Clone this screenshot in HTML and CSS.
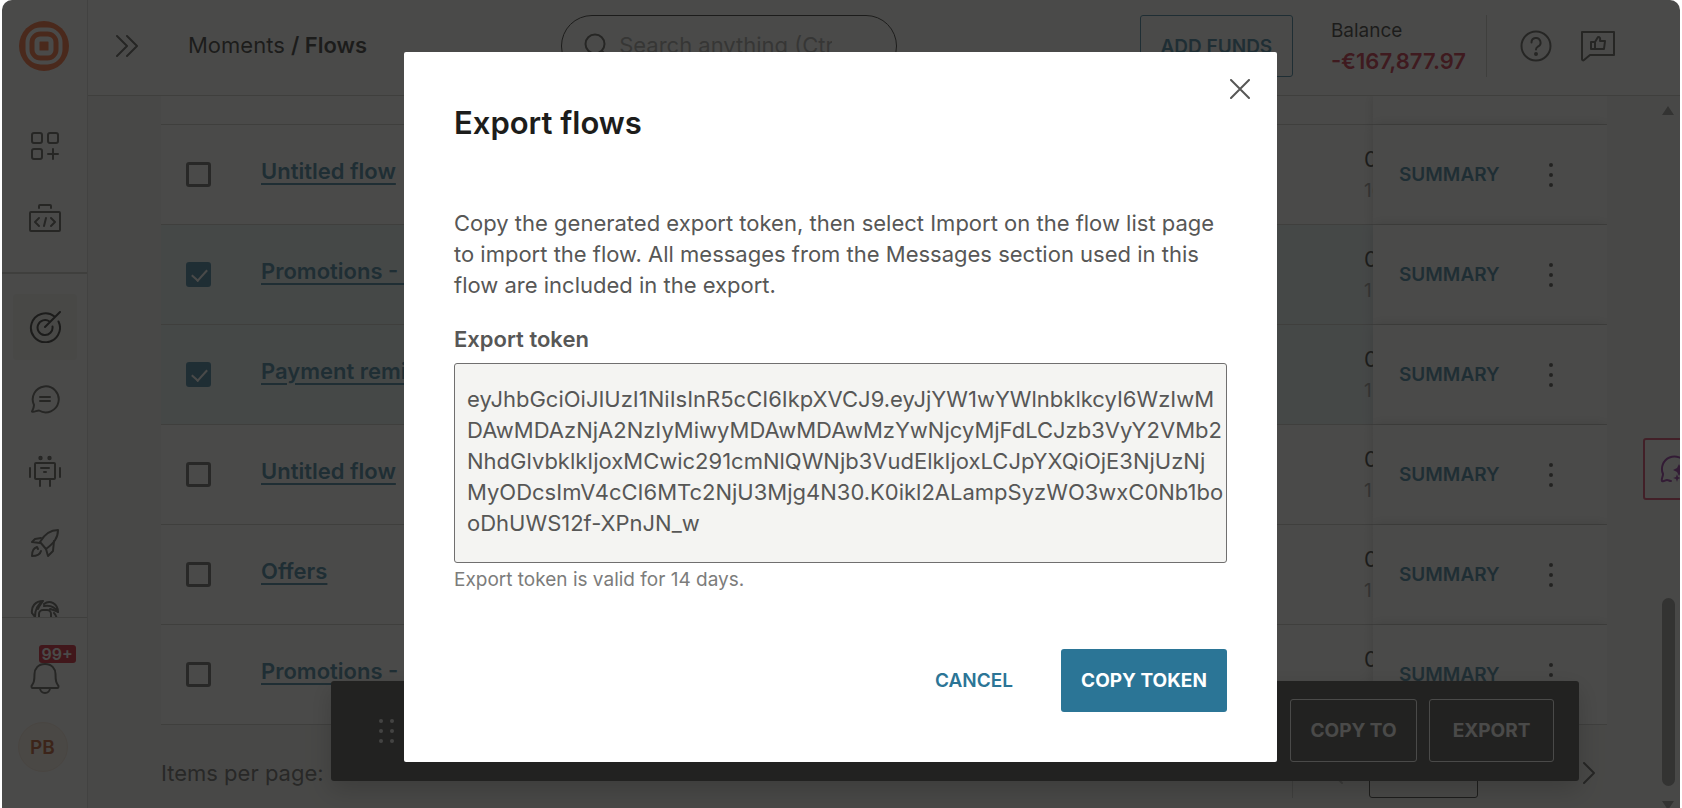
FILE: index.html
```html
<!DOCTYPE html>
<html lang="en">
<head>
    <meta charset="UTF-8">
    <meta name="viewport" content="width=device-width, initial-scale=1.0">
    <title>Flows</title>
    <link rel="stylesheet" href="styles.css">
</head>
<body>

<div class="app">

    <aside class="sidebar">
        <a class="logo" href="#" aria-label="Home">
            <svg width="50" height="50" viewBox="0 0 50 50">
                <circle cx="25" cy="25" r="25" fill="#ff5a1f"/>
                <rect x="8.5" y="8.5" width="33" height="33" rx="13" fill="none" stroke="#fff" stroke-width="4"/>
                <rect x="18" y="18" width="14" height="14" rx="3" fill="none" stroke="#fff" stroke-width="5"/>
            </svg>
        </a>

        <nav class="menu">
            <a href="#" aria-label="Apps">
                <svg width="32" height="32" viewBox="0 0 32 32">
                    <rect x="3" y="3" width="10" height="10" rx="2"/>
                    <rect x="19" y="3" width="10" height="10" rx="2"/>
                    <rect x="3" y="19" width="10" height="10" rx="2"/>
                    <path d="M24 19v10M19 24h10"/>
                </svg>
            </a>
            <a href="#" aria-label="Developer tools">
                <svg width="32" height="32" viewBox="0 0 32 32">
                    <rect x="1" y="10" width="30" height="19" rx="1"/>
                    <path d="M10 6V4a1 1 0 0 1 1-1h10a1 1 0 0 1 1 1v2M10 16l-4 4 4 4M22 16l4 4-4 4M17 16l-2 8"/>
                </svg>
            </a>
            <hr>
            <a href="#" class="active" aria-label="Moments">
                <svg width="32" height="32" viewBox="0 0 32 32">
                    <path d="M25.5 5.5A14.5 14.5 0 1 0 29.5 10.5M20.5 10.5A7.5 7.5 0 1 0 23.5 15.5M16 16L31 1"/>
                </svg>
            </a>
            <a href="#" aria-label="Conversations">
                <svg width="32" height="32" viewBox="0 0 32 32">
                    <path d="M5 22A13 13 0 1 1 10 27.5C7.5 27.5 5 29.5 3 28.5C4 26.5 5 24.5 5 22z"/>
                    <path d="M11 14h10M11 18h10"/>
                </svg>
            </a>
            <a href="#" aria-label="Answers">
                <svg width="32" height="32" viewBox="0 0 32 32">
                    <rect x="6" y="8" width="20" height="16" rx="1"/>
                    <path d="M12 13h8M15 17h2M11 24v7M21 24v7M1 13v9M31 13v9"/>
                    <circle cx="11.5" cy="3" r="1.2"/>
                    <circle cx="20.5" cy="3" r="1.2"/>
                </svg>
            </a>
            <a href="#" aria-label="Broadcast">
                <svg width="32" height="32" viewBox="0 0 32 32">
                    <path d="M11 15C15 8 20 3 29 3C29 11 25 16 17 22z"/>
                    <path d="M12 11L6 12L3 15L11 16M17 22L19 29L24 24L25 14"/>
                    <path d="M8 20C4 21 3 25 3 29C7 29 11 28 12 24M8 20l1 2"/>
                </svg>
            </a>
            <a href="#" aria-label="People">
                <svg width="32" height="32" viewBox="0 0 32 32">
                    <path d="M3 14C2 8 6 2 14 2C9 5 6 9 6 18M3 14L6 18M14 2C12 5 10 7 9 10M15 5C21 0 29 5 29 13C26 8 21 6 15 7"/>
                    <path d="M29 13C26 11 24 11 21 10M10 22v-7a4 4 0 0 1 4-4h4a4 4 0 0 1 4 4v7M25 14c2 2 3 5 3 8"/>
                </svg>
            </a>
        </nav>

        <div class="account">
            <button class="bell" aria-label="Notifications">
                <svg width="32" height="34" viewBox="0 0 32 34">
                    <path d="M16 2c-7 0-10.5 5-10.5 10c0 8-1 9-3 12c0 1 0 2 1 2h25c1 0 1-1 1-2c-2-3-3-4-3-12c0-5-3.5-10-10.5-10zM11 26a5 5 0 0 0 10 0"/>
                </svg>
                <span class="badge">99+</span>
            </button>
            <button class="avatar">PB</button>
        </div>
    </aside>

    <div class="page">
        <header class="topbar">
            <button class="expand" aria-label="Expand menu">
                <svg width="22" height="22" viewBox="0 0 22 22">
                    <path d="M1 1l10 10L1 21M11 1l10 10L11 21"/>
                </svg>
            </button>
            <div class="breadcrumb">Moments <b>/ Flows</b></div>

            <label class="search">
                <svg width="24" height="24" viewBox="0 0 24 24">
                    <circle cx="11" cy="11" r="9.5"/>
                    <path d="M18 18l5 5"/>
                </svg>
                <input type="text" placeholder="Search anything (Ctr" aria-label="Search">
            </label>

            <div class="tools">
                <button class="add-funds">ADD FUNDS</button>
                <div class="balance">
                    <span>Balance</span>
                    <strong>-€167,877.97</strong>
                </div>
                <button class="icon-btn" aria-label="Help">
                    <svg width="32" height="32" viewBox="0 0 32 32">
                        <circle cx="16" cy="16" r="14.5"/>
                        <path d="M11.5 12.5a4.5 4.5 0 1 1 6.5 4c-1.5 1-2 1.5-2 3"/>
                        <circle cx="16" cy="24" r="1"/>
                    </svg>
                </button>
                <button class="icon-btn" aria-label="Feedback">
                    <svg width="36" height="32" viewBox="0 0 36 32">
                        <path d="M2 2h32v23H10l-6 5c-1 1-2 0-2-1z"/>
                        <path d="M11 12h4v7h-4zM15 12l3-5c2 0 2.5 1 2 4h5l-1 8h-9z"/>
                    </svg>
                </button>
            </div>
        </header>

        <main class="content">
            <div class="table-wrap">
                <table>
                    <thead>
                        <tr>
                            <td class="col-check"></td>
                            <td></td>
                            <td class="col-date"></td>
                            <td class="col-actions"></td>
                        </tr>
                    </thead>
                    <tbody>
                        <tr>
                            <td><input type="checkbox" aria-label="Untitled flow"></td>
                            <td><a href="#">Untitled flow</a></td>
                            <td class="date">0<small>16</small></td>
                            <td class="actions"><div><button class="summary">SUMMARY</button><button class="more" aria-label="More"><i></i><i></i><i></i></button></div></td>
                        </tr>
                        <tr class="selected">
                            <td><input type="checkbox" checked aria-label="Promotions"></td>
                            <td><a href="#">Promotions - A</a></td>
                            <td class="date">0<small>1</small></td>
                            <td class="actions"><div><button class="summary">SUMMARY</button><button class="more" aria-label="More"><i></i><i></i><i></i></button></div></td>
                        </tr>
                        <tr class="selected">
                            <td><input type="checkbox" checked aria-label="Payment reminder"></td>
                            <td><a href="#">Payment reminder</a></td>
                            <td class="date">0<small>1</small></td>
                            <td class="actions"><div><button class="summary">SUMMARY</button><button class="more" aria-label="More"><i></i><i></i><i></i></button></div></td>
                        </tr>
                        <tr>
                            <td><input type="checkbox" aria-label="Untitled flow"></td>
                            <td><a href="#">Untitled flow</a></td>
                            <td class="date">0<small>1</small></td>
                            <td class="actions"><div><button class="summary">SUMMARY</button><button class="more" aria-label="More"><i></i><i></i><i></i></button></div></td>
                        </tr>
                        <tr>
                            <td><input type="checkbox" aria-label="Offers"></td>
                            <td><a href="#">Offers</a></td>
                            <td class="date">0<small>1</small></td>
                            <td class="actions"><div><button class="summary">SUMMARY</button><button class="more" aria-label="More"><i></i><i></i><i></i></button></div></td>
                        </tr>
                        <tr>
                            <td><input type="checkbox" aria-label="Promotions"></td>
                            <td><a href="#">Promotions - A</a></td>
                            <td class="date">0<small>1</small></td>
                            <td class="actions"><div><button class="summary">SUMMARY</button><button class="more" aria-label="More"><i></i><i></i><i></i></button></div></td>
                        </tr>
                    </tbody>
                </table>
            </div>

            <div class="pagination">
                <span>Items per page:</span>
                <div class="pager">
                    <button class="prev" aria-label="Previous page">
                        <svg width="12" height="22" viewBox="0 0 12 22"><path d="M11 1L1 11l10 10"/></svg>
                    </button>
                    <input type="text" aria-label="Page">
                    <button aria-label="Next page">
                        <svg width="12" height="22" viewBox="0 0 12 22"><path d="M1 1l10 10L1 21"/></svg>
                    </button>
                </div>
            </div>

            <div class="scrollbar">
                <span class="up"></span>
                <span class="thumb"></span>
                <span class="down"></span>
            </div>
        </main>
    </div>

    <div class="selection-bar">
        <span class="grip"><i></i><i></i><i></i><i></i><i></i><i></i></span>
        <button class="copy-to">COPY TO</button>
        <button class="export">EXPORT</button>
    </div>

    <button class="assistant" aria-label="Assistant">
        <svg width="32" height="32" viewBox="0 0 32 32">
            <path d="M4 21A12 12 0 1 1 27 11M4 21c0 3-2 5-1 7c2 1 3-1 5-1s2 1 4 1"/>
            <path class="star" d="M20 11l2 4 4 2-4 2-2 4-2-4-4-2 4-2zM18 21l1 3 3 1-3 1-1 3-1-3-3-1 3-1z"/>
        </svg>
    </button>

    <div class="backdrop">
        <div class="modal" role="dialog" aria-labelledby="modal-title">
            <button class="close" aria-label="Close">
                <svg width="20" height="20" viewBox="0 0 20 20"><path d="M1 1l18 18M19 1L1 19"/></svg>
            </button>
            <h2 id="modal-title">Export flows</h2>
            <p>Copy the generated export token, then select Import on the flow list page to import the flow. All messages from the Messages section used in this flow are included in the export.</p>
            <label for="token">Export token</label>
            <textarea id="token" readonly>eyJhbGciOiJIUzI1NiIsInR5cCI6IkpXVCJ9.eyJjYW1wYWlnbklkcyI6WzIwM
DAwMDAzNjA2NzIyMiwyMDAwMDAwMzYwNjcyMjFdLCJzb3VyY2VMb2
NhdGlvbklkIjoxMCwic291cmNlQWNjb3VudElkIjoxLCJpYXQiOjE3NjUzNj
MyODcsImV4cCI6MTc2NjU3Mjg4N30.K0ikl2ALampSyzWO3wxC0Nb1bo
oDhUWS12f-XPnJN_w</textarea>
            <small class="hint">Export token is valid for 14 days.</small>
            <div class="modal-actions">
                <button class="cancel">CANCEL</button>
                <button class="primary">COPY TOKEN</button>
            </div>
        </div>
    </div>

</div>

</body>
</html>
```
FILE: styles.css
```css
* {
    box-sizing: border-box;
}

body {
    margin: 0;
    padding: 0 2px;
    height: 100vh;
    overflow: hidden;
    background: #fff;
    color: #1d1d1b;
    font-family: Inter, "Liberation Sans", sans-serif;
    font-size: 22px;
}

button, input, textarea {
    font-family: inherit;
    margin: 0;
}

button {
    padding: 0;
    border: none;
    background: none;
    font-size: 19px;
    font-weight: 600;
    cursor: pointer;
}

svg {
    display: block;
    fill: none;
    stroke: #4a4a49;
    stroke-width: 2;
    stroke-linecap: round;
    stroke-linejoin: round;
}

.logo svg {
    stroke: none;
}

.app {
    position: relative;
    display: flex;
    height: 100%;
    overflow: hidden;
    border-radius: 10px 10px 0 0;
    background: #fff;
}

/* sidebar */
.sidebar {
    display: flex;
    flex-direction: column;
    flex: none;
    width: 86px;
    border-right: 1px solid #d8d8d6;
}

.logo {
    padding: 21px 17px;
}

.menu {
    display: flex;
    flex-direction: column;
    align-items: center;
    gap: 6px;
    flex: 1;
    min-height: 0;
    overflow: hidden;
    padding-top: 21px;
}

.menu a {
    display: flex;
    align-items: center;
    justify-content: center;
    flex: none;
    width: 64px;
    height: 66px;
    border-radius: 4px;
}

.menu hr {
    flex: none;
    width: 100%;
    height: 2px;
    margin: 15px 0 14px;
    border: none;
    background: #c6c6c4;
}

.menu .active {
    background: #f2f2f0;
}

.menu .active svg {
    stroke: #1d1d1b;
}

.account {
    display: flex;
    flex-direction: column;
    align-items: center;
    gap: 26px;
    height: 191px;
    padding-top: 44px;
    border-top: 1px solid #c6c6c4;
}

.bell {
    position: relative;
}

.badge {
    position: absolute;
    top: -17px;
    left: 10px;
    padding: 0 3px;
    border-radius: 3px;
    background: #d0021b;
    color: #fff;
    font-size: 16px;
    line-height: 18px;
}

.avatar {
    width: 50px;
    height: 50px;
    margin-right: 4px;
    border: 1px solid #f8e6d8;
    border-radius: 50%;
    background: #fcf3e8;
    color: #b8420f;
}

/* top bar */
.page {
    display: flex;
    flex-direction: column;
    flex: 1;
    min-width: 0;
}

.topbar {
    display: flex;
    align-items: center;
    flex: none;
    height: 96px;
    padding: 0 64px 3px 28px;
    border-bottom: 1px solid #c6c6c4;
}

.breadcrumb {
    margin-left: 50px;
    padding-bottom: 3px;
}

.breadcrumb b {
    font-weight: 600;
}

.search {
    display: flex;
    align-items: center;
    gap: 11px;
    width: 336px;
    height: 62px;
    margin-left: 194px;
    padding: 0 64px 2px 22px;
    border: 1px solid #1d1d1b;
    border-radius: 32px;
}

.search svg {
    flex: none;
}

.search input {
    width: 100%;
    min-width: 0;
    padding: 0;
    border: none;
    background: none;
    font-size: 22px;
}

.search input::placeholder {
    color: #9d9d9c;
}

.tools {
    display: flex;
    align-items: center;
    margin-left: auto;
}

.add-funds {
    width: 153px;
    height: 62px;
    border: 1px solid #2b7596;
    border-radius: 3px;
    color: #2b7596;
}

.balance {
    display: flex;
    flex-direction: column;
    margin-left: 38px;
    margin-right: 33px;
    padding-right: 20px;
    border-right: 1px solid #c6c6c4;
    line-height: 31px;
}

.balance span {
    font-size: 19px;
}

.balance strong {
    color: #c8102e;
    font-weight: 600;
}

.icon-btn + .icon-btn {
    margin-left: 28px;
}

/* flow list */
.content {
    position: relative;
    flex: 1;
    min-height: 0;
    padding: 0 73px;
    background: #f4f4f2;
}

.table-wrap {
    overflow: hidden;
    background: #fff;
}

table {
    width: 100%;
    table-layout: fixed;
    border-collapse: separate;
    border-spacing: 0;
}

td {
    height: 100px;
    padding: 0;
    border-bottom: 1px solid #c6c6c4;
}

thead td {
    height: 29px;
}

.col-check {
    width: 100px;
}

.col-date {
    width: 9px;
}

.col-actions {
    width: 234px;
    box-shadow: 0 0 12px rgba(0, 0, 0, 0.2);
}

.selected td {
    background: #e7f3f6;
}

td a {
    color: #2b7596;
    font-weight: 600;
    line-height: 26px;
    text-decoration: underline;
    text-decoration-thickness: 2px;
    text-underline-offset: 4px;
}

td:nth-child(2) {
    padding-bottom: 7px;
}

input[type="checkbox"] {
    position: relative;
    display: block;
    width: 25px;
    height: 25px;
    margin-left: 25px;
    appearance: none;
    border: 3px solid #575756;
    border-radius: 3px;
}

input[type="checkbox"]:checked {
    border-color: #2b7596;
    background: #2b7596;
}

input[type="checkbox"]:checked::after {
    content: "";
    position: absolute;
    top: 1px;
    left: 6px;
    width: 7px;
    height: 13px;
    border: solid #fff;
    border-width: 0 2px 2px 0;
    transform: rotate(42deg);
}

.date {
    overflow: hidden;
    white-space: nowrap;
    line-height: 32px;
}

.date small {
    display: block;
    color: #878787;
    font-size: 19px;
}

.actions,
.selected .actions {
    background: #fff;
    box-shadow: 0 0 12px rgba(0, 0, 0, 0.2);
}

.actions div {
    display: flex;
    align-items: center;
    justify-content: space-between;
    padding: 0 54px 0 26px;
}

.summary {
    color: #2b7596;
}

.more {
    display: flex;
    flex-direction: column;
    gap: 6px;
}

.more i,
.grip i {
    width: 4px;
    height: 4px;
    border-radius: 50%;
    background: #3c3c3b;
}

/* pagination */
.pagination {
    display: flex;
    align-items: center;
    justify-content: space-between;
    height: 96px;
    padding-right: 12px;
    color: #575756;
}

.pager {
    display: flex;
    align-items: center;
    padding-left: 38px;
    border-left: 1px solid #c6c6c4;
}

.pager input {
    width: 109px;
    height: 50px;
    margin: 0 105px 0 26px;
    border: 1px solid #1d1d1b;
    border-radius: 3px;
    background: none;
}

.prev {
    opacity: 0.4;
}

.scrollbar {
    position: absolute;
    top: 0;
    right: 0;
    bottom: 0;
    display: flex;
    flex-direction: column;
    align-items: center;
    width: 24px;
    padding: 10px 0 0;
    background: #f6f6f6;
}

.scrollbar .up,
.scrollbar .down {
    border: 6px solid transparent;
    border-top: none;
    border-bottom: 9px solid #8b8b8b;
}

.scrollbar .thumb {
    width: 13px;
    height: 188px;
    margin-top: auto;
    margin-bottom: 15px;
    border-radius: 7px;
    background: #8b8b8b;
}

.scrollbar .down {
    margin-bottom: -2px;
    border-top: 9px solid #8b8b8b;
    border-bottom: none;
}

/* bar with the actions for the selected rows */
.selection-bar {
    position: absolute;
    left: 329px;
    right: 101px;
    bottom: 27px;
    display: flex;
    align-items: center;
    gap: 12px;
    height: 100px;
    padding: 0 25px 1px 48px;
    border-radius: 3px;
    background: #393938;
    box-shadow: 0 8px 24px rgba(0, 0, 0, 0.25);
}

.selection-bar button {
    height: 63px;
    border: 1px solid #fff;
    border-radius: 3px;
    color: #fff;
    font-weight: 700;
}

.copy-to {
    width: 127px;
}

.export {
    width: 125px;
}

.grip {
    display: grid;
    grid-template-columns: 4px 4px;
    gap: 6px 7px;
    margin-right: auto;
}

.grip i {
    background: #dadada;
}

.assistant {
    position: absolute;
    top: 438px;
    right: -24px;
    width: 61px;
    height: 62px;
    padding-left: 14px;
    border: 2px solid #d8305a;
    border-radius: 3px;
    background: #fff;
}

.assistant svg {
    stroke: #8a1a9b;
}

.assistant .star {
    fill: #8a1a9b;
    stroke: none;
}

/* modal */
.backdrop {
    position: absolute;
    inset: 0;
    display: flex;
    align-items: flex-start;
    justify-content: center;
    padding: 52px 1px 0 0;
    background: rgba(29, 29, 27, 0.8);
}

.modal {
    position: relative;
    width: 873px;
    padding: 50px;
    border-radius: 2px;
    background: #fff;
    color: #575756;
}

.close {
    position: absolute;
    top: 27px;
    right: 27px;
}

.close svg {
    stroke: #575756;
}

.modal h2 {
    margin: 0;
    color: #1d1d1b;
    font-size: 31px;
    font-weight: 600;
    line-height: 42px;
}

.modal p {
    margin: 64px 0 23px;
    line-height: 31px;
}

.modal label {
    display: block;
    margin-bottom: 8px;
    font-weight: 600;
    line-height: 31px;
}

.modal textarea {
    display: block;
    width: 100%;
    height: 200px;
    padding: 20px 12px;
    overflow: hidden;
    border: 1px solid #706f6f;
    border-radius: 3px;
    background: #f4f4f2;
    color: #575756;
    font-size: 22px;
    line-height: 31px;
    white-space: pre;
    resize: none;
}

.hint {
    display: block;
    margin-top: 4px;
    color: #7c7c7b;
    font-size: 19px;
    line-height: 26px;
}

.modal-actions {
    display: flex;
    justify-content: flex-end;
    gap: 48px;
    margin-top: 56px;
}

.modal-actions button {
    height: 63px;
}

.cancel {
    color: #2b7596;
}

.modal-actions .primary {
    width: 166px;
    border-radius: 3px;
    background: #2b7596;
    color: #fff;
    font-weight: 700;
}
```
